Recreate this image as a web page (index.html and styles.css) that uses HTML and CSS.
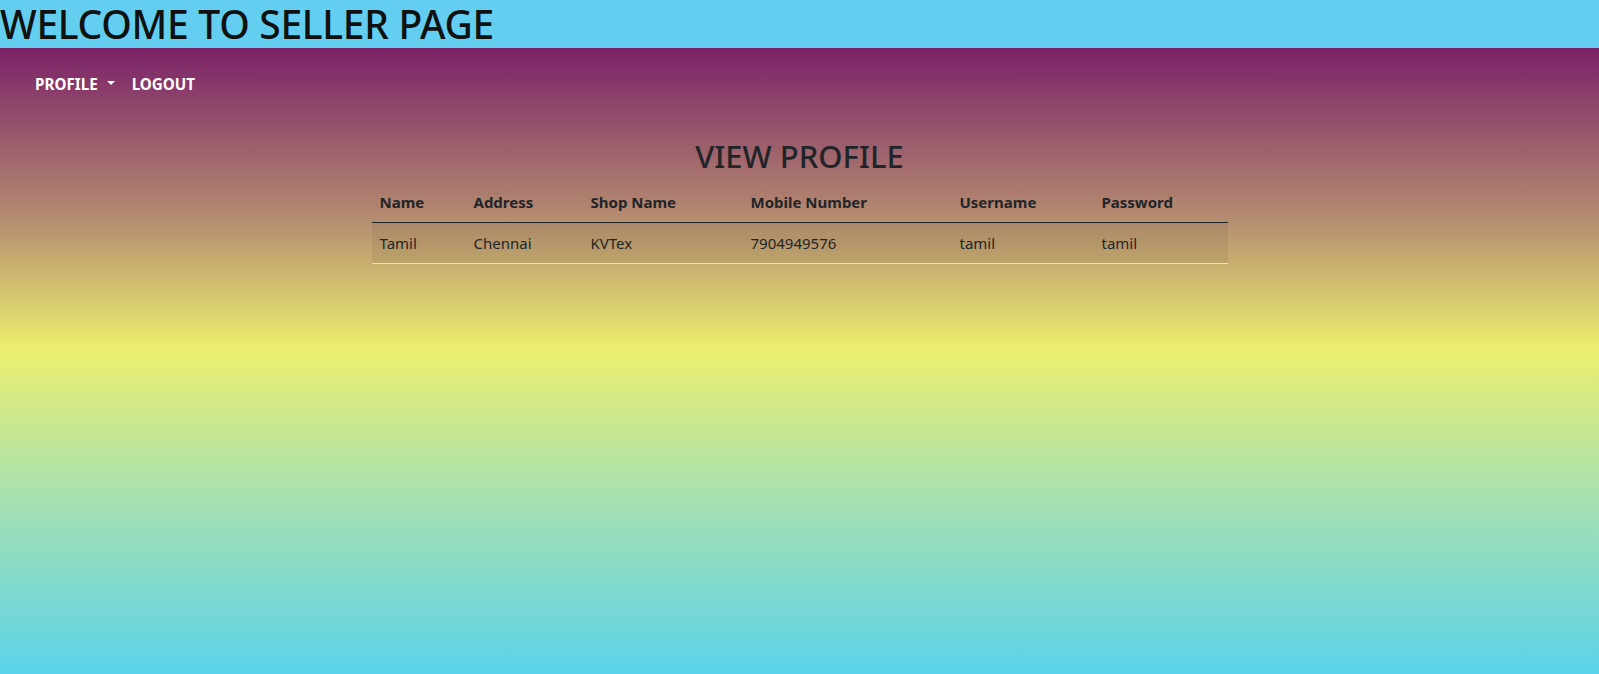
FILE: index.html
```html
<!DOCTYPE html>
<html>
<head>
<meta charset="utf-8">
<link rel="stylesheet" href="styles.css">
</head>
<body>
<header class="top">
  <h1 class="title">WELCOME TO SELLER PAGE</h1>
</header>
<main class="page">
  <nav class="nav">
    <a class="nav-link" href="#">PROFILE <span class="caret"></span></a>
    <a class="nav-link" href="#">LOGOUT</a>
  </nav>
  <h2 class="heading">VIEW PROFILE</h2>
  <table class="profile">
    <colgroup>
      <col class="c1"><col class="c2"><col class="c3"><col class="c4"><col class="c5"><col class="c6">
    </colgroup>
    <thead>
      <tr><th>Name</th><th>Address</th><th>Shop Name</th><th>Mobile Number</th><th>Username</th><th>Password</th></tr>
    </thead>
    <tbody>
      <tr><td>Tamil</td><td>Chennai</td><td>KVTex</td><td>7904949576</td><td>tamil</td><td>tamil</td></tr>
    </tbody>
  </table>
</main>
</body>
</html>
```
FILE: styles.css
```css
html, body {
  margin: 0;
  padding: 0;
  height: 100%;
}
body {
  font-family: "Noto Sans", "Open Sans", sans-serif;
  color: #212529;
  display: flex;
  flex-direction: column;
}
.top {
  background: #63cef0;
  height: 48px;
}
.title {
  margin: 0;
  font-size: 39px;
  font-weight: 500;
  line-height: 48px;
  color: #111;
  letter-spacing: -0.3px;
  white-space: nowrap;
}
.page {
  flex: 1;
  background: linear-gradient(to bottom, #7b2268 0%, #b68f70 28%, #ecef6f 48%, #a6e0b0 72%, #5bd3ea 100%);
}
.nav {
  display: flex;
  gap: 17px;
  padding: 24px 35px 0;
  height: 24px;
}
.nav-link {
  color: #fff;
  font-weight: 700;
  font-size: 15.2px;
  line-height: 24px;
  text-decoration: none;
  display: flex;
  align-items: center;
  gap: 9px;
}
.caret {
  width: 0;
  height: 0;
  border-left: 4px solid transparent;
  border-right: 4px solid transparent;
  border-top: 4px solid #fff;
  margin-top: -2px;
}
.heading {
  text-align: center;
  font-size: 31px;
  font-weight: 500;
  line-height: 38px;
  margin: 41px 0 7px;
  color: #212529;
}
.profile {
  width: 856px;
  margin: 0 auto;
  border-collapse: collapse;
  table-layout: fixed;
  font-size: 15px;
}
.c1 { width: 94px; }
.c2 { width: 117px; }
.c3 { width: 160px; }
.c4 { width: 209px; }
.c5 { width: 142px; }
.c6 { width: 134px; }
.profile th, .profile td {
  text-align: left;
  padding: 8px;
  line-height: 24px;
}
.profile th {
  font-weight: 700;
  border-bottom: 1px solid #212529;
}
.profile td {
  background: rgba(0, 0, 0, 0.05);
  border-bottom: 1px solid #dee2e6;
}
```
